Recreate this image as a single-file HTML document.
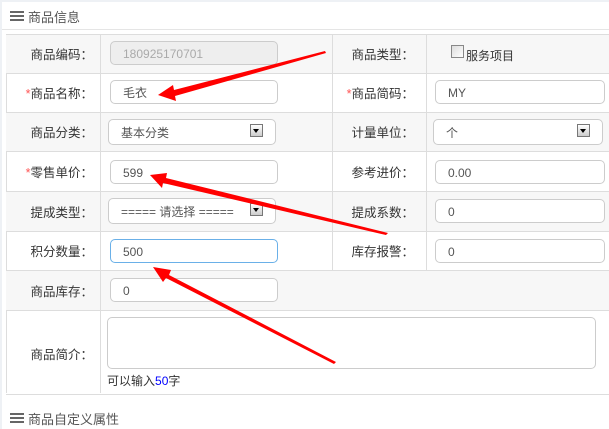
<!DOCTYPE html>
<html><head><meta charset="utf-8"><style>
body{margin:0;width:609px;height:429px;background:#eef1f5;font-family:"Liberation Sans","Noto Sans CJK SC",sans-serif;font-size:12px;color:#333;position:relative;overflow:hidden}
.panel{position:absolute;left:2px;top:2px;right:0;bottom:0;background:#fff}
.hd{position:absolute;left:10px;font-size:13px;color:#555}
.hd i{display:inline-block;width:14px;height:2px;background:#666;box-shadow:0 4px 0 #666,0 8px 0 #666;vertical-align:top;margin-top:4px;margin-right:4px}
.row{position:absolute;left:6px;right:0;border-top:1px solid #ddd}
.g{background:#f7f7f7}
.vl{position:absolute;width:1px;background:#ddd}
.lb{position:absolute;text-align:right;font-size:12.5px;line-height:14px}
.lb b{color:#f55;font-weight:normal}
.in{position:absolute;height:24px;border:1px solid #ccc;border-radius:5px;background:#fff;box-sizing:border-box;padding-left:12px;line-height:24px;color:#555;font-size:12px}
.sel .ar{position:absolute;right:12px;top:4px;width:13px;height:13px;border:1px solid #777;background:linear-gradient(#fff,#ccc);box-sizing:border-box}
.sel .ar:after{content:"";position:absolute;left:2px;top:4px;border:3.5px solid transparent;border-top:4px solid #000}
</style></head><body>
<div class="panel"></div>
<div class="hd" style="top:7px"><i></i>商品信息</div>
<div style="position:absolute;left:2px;right:0;top:29px;border-top:1px solid #e5e5e5"></div>
<div style="position:absolute;left:6px;top:34px;height:359px;width:1px;background:#ddd"></div>
<div class="row g" style="top:34px;height:39px"></div>
<div class="row" style="top:73px;height:39px"></div>
<div class="row g" style="top:112px;height:39px"></div>
<div class="row" style="top:151px;height:40px"></div>
<div class="row g" style="top:191px;height:40px"></div>
<div class="row" style="top:231px;height:39px"></div>
<div class="row g" style="top:270px;height:40px"></div>
<div class="row" style="top:310px;height:83px;border-bottom:1px solid #ddd"></div>
<div class="vl" style="left:100px;top:34px;height:359px"></div>
<div class="vl" style="left:332px;top:34px;height:236px"></div>
<div class="vl" style="left:426px;top:34px;height:236px"></div>

<div class="lb" style="right:516px;top:48px">商品编码：</div>
<div class="lb" style="right:516px;top:87px"><b>*</b>商品名称：</div>
<div class="lb" style="right:516px;top:126px">商品分类：</div>
<div class="lb" style="right:516px;top:166px"><b>*</b>零售单价：</div>
<div class="lb" style="right:516px;top:206px">提成类型：</div>
<div class="lb" style="right:516px;top:245px">积分数量：</div>
<div class="lb" style="right:516px;top:285px">商品库存：</div>
<div class="lb" style="right:516px;top:348px">商品简介：</div>

<div class="lb" style="right:195px;top:48px">商品类型：</div>
<div class="lb" style="right:195px;top:87px"><b>*</b>商品简码：</div>
<div class="lb" style="right:195px;top:126px">计量单位：</div>
<div class="lb" style="right:195px;top:166px">参考进价：</div>
<div class="lb" style="right:195px;top:206px">提成系数：</div>
<div class="lb" style="right:195px;top:245px">库存报警：</div>

<div class="in" style="left:110px;top:41px;width:168px;background:#eee;color:#aaa">180925170701</div>
<div class="in" style="left:110px;top:80px;width:168px">毛衣</div>
<div class="in sel" style="left:108px;top:119px;width:168px;height:26px;line-height:26px">基本分类<span class="ar"></span></div>
<div class="in" style="left:110px;top:160px;width:168px">599</div>
<div class="in sel" style="left:108px;top:198px;width:168px;height:26px;line-height:26px">===== 请选择 =====<span class="ar"></span></div>
<div class="in" style="left:110px;top:239px;width:168px;border-color:#6ab0e8">500</div>
<div class="in" style="left:110px;top:278px;width:168px">0</div>
<div class="in" style="left:107px;top:317px;width:489px;height:52px"></div>
<div style="position:absolute;left:107px;top:372px">可以输入<span style="color:#00f">50</span>字</div>

<div style="position:absolute;left:451px;top:45px;width:11px;height:11px;border:1px solid #888;background:linear-gradient(135deg,#ddd,#fff)"></div>
<div style="position:absolute;left:466px;top:47px">服务项目</div>
<div class="in" style="left:435px;top:80px;width:170px">MY</div>
<div class="in sel" style="left:433px;top:119px;width:170px;height:26px;line-height:26px">个<span class="ar"></span></div>
<div class="in" style="left:435px;top:160px;width:170px">0.00</div>
<div class="in" style="left:435px;top:199px;width:170px">0</div>
<div class="in" style="left:435px;top:239px;width:170px">0</div>

<svg style="position:absolute;left:0;top:0" width="609" height="429">
<polygon points="325,51 174,90 173,85 158,95 176,101 175,96 326,53" fill="#f00"/>
<polygon points="388,233 166,178 167,173 150,175 162,188 163,183 386,235" fill="#f00"/>
<polygon points="336,362 169,275 171,270 153,267 163,282 166,278 334,364" fill="#f00"/>
</svg>

<div class="hd" style="top:409px"><i></i>商品自定义属性</div>
</body></html>
